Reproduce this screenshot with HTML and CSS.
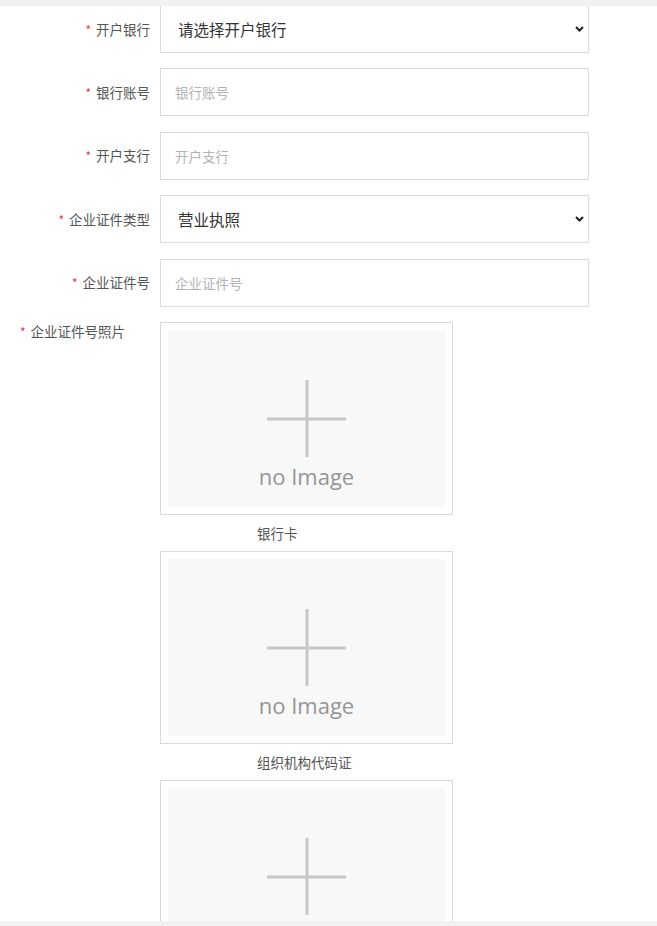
FILE: index.html
```html
<!DOCTYPE html>
<html lang="zh-CN">
<head>
<meta charset="utf-8">
<title>企业信息</title>
<link rel="stylesheet" href="styles.css">
</head>
<body>
<div class="topbar"></div>
<main class="form">
  <div class="row">
    <label class="label"><span class="req">*</span>开户银行</label>
    <div class="select-wrap">
      <select class="field select"><option>请选择开户银行</option></select>
      <svg class="chev" viewBox="0 0 9 6" width="9" height="6"><path d="M1 1 L4.5 4.5 L8 1" fill="none" stroke="#222" stroke-width="2"/></svg>
    </div>
  </div>
  <div class="row">
    <label class="label"><span class="req">*</span>银行账号</label>
    <input class="field input" type="text" placeholder="银行账号">
  </div>
  <div class="row">
    <label class="label"><span class="req">*</span>开户支行</label>
    <input class="field input" type="text" placeholder="开户支行">
  </div>
  <div class="row">
    <label class="label"><span class="req">*</span>企业证件类型</label>
    <div class="select-wrap">
      <select class="field select"><option>营业执照</option></select>
      <svg class="chev" viewBox="0 0 9 6" width="9" height="6"><path d="M1 1 L4.5 4.5 L8 1" fill="none" stroke="#222" stroke-width="2"/></svg>
    </div>
  </div>
  <div class="row">
    <label class="label"><span class="req">*</span>企业证件号</label>
    <input class="field input" type="text" placeholder="企业证件号">
  </div>
  <div class="row photo-row">
    <label class="label label-photo"><span class="req">*</span>企业证件号照片</label>
    <div class="uploads">
      <div class="upload">
        <div class="upload-inner">
          <svg class="cross" viewBox="0 0 79 79" width="79" height="79"><path d="M40 1 V78 M0 40 H79" stroke="#c6c6c6" stroke-width="3" fill="none"/></svg>
          <div class="noimg">no Image</div>
        </div>
      </div>
      <div class="caption">银行卡</div>
      <div class="upload">
        <div class="upload-inner">
          <svg class="cross" viewBox="0 0 79 79" width="79" height="79"><path d="M40 1 V78 M0 40 H79" stroke="#c6c6c6" stroke-width="3" fill="none"/></svg>
          <div class="noimg">no Image</div>
        </div>
      </div>
      <div class="caption">组织机构代码证</div>
      <div class="upload">
        <div class="upload-inner">
          <svg class="cross" viewBox="0 0 79 79" width="79" height="79"><path d="M40 1 V78 M0 40 H79" stroke="#c6c6c6" stroke-width="3" fill="none"/></svg>
        </div>
      </div>
    </div>
  </div>
</main>
<div class="bottombar"></div>
</body>
</html>
```
FILE: styles.css
```css
html, body {
  margin: 0;
  background: #fff;
}
body {
  font-family: "Noto Sans CJK SC", "Microsoft YaHei", sans-serif;
  color: #555;
  height: 926px;
  overflow: hidden;
}
.topbar {
  position: fixed;
  top: 0;
  left: 0;
  right: 0;
  height: 6px;
  background: #f2f2f2;
  z-index: 2;
}
.bottombar {
  position: fixed;
  bottom: 0;
  left: 0;
  right: 0;
  height: 5px;
  background: #f2f2f2;
  z-index: 2;
}
.form {
  padding-top: 5px;
}
.row {
  display: flex;
  align-items: center;
  margin-bottom: 15.4px;
}
.label {
  width: 150px;
  flex: none;
  box-sizing: border-box;
  text-align: right;
  font-size: 13.5px;
  line-height: 18px;
  color: #555;
  margin-right: 10px;
}
.req {
  color: #e4393c;
  font-size: 12px;
  margin-right: 5px;
}
.field {
  display: block;
  width: 429px;
  height: 48px;
  box-sizing: border-box;
  border: 1px solid #dcdcdc;
  border-radius: 0;
  background: #fff;
  font-family: inherit;
  outline: none;
  margin: 0;
}
.input {
  padding: 0 14px;
  font-size: 13.5px;
  color: #333;
}
.input::placeholder {
  color: #b3b3b3;
}
.select-wrap {
  position: relative;
}
.select {
  appearance: none;
  -webkit-appearance: none;
  padding: 0 17px;
  font-size: 15.5px;
  color: #333;
}
.chev {
  position: absolute;
  right: 5px;
  top: 21px;
  pointer-events: none;
}
.photo-row {
  align-items: flex-start;
}
.label-photo {
  text-align: left;
  padding-left: 20px;
}
.upload {
  width: 293px;
  height: 193px;
  box-sizing: border-box;
  border: 1px solid #d9d9d9;
  padding: 7px;
  background: #fff;
}
.upload-inner {
  height: 100%;
  box-sizing: border-box;
  background: #f8f8f8;
  display: flex;
  flex-direction: column;
  align-items: center;
  padding-top: 49px;
}
.cross {
  display: block;
}
.noimg {
  font-family: "Open Sans", sans-serif;
  font-size: 22px;
  line-height: 30px;
  color: #959595;
  margin-top: 3px;
}
.caption {
  height: 36px;
  line-height: 36px;
  padding-left: 97px;
  font-size: 13.5px;
  color: #555;
}
```
